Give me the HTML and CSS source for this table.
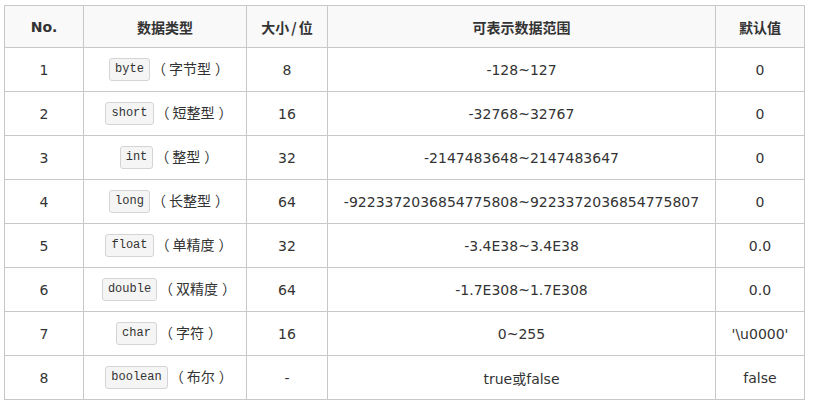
FILE: index.html
```html
<!DOCTYPE html>
<html lang="zh">
<head>
<meta charset="utf-8">
<title>Java 基本数据类型</title>
<link rel="stylesheet" href="styles.css">
</head>
<body>
<table class="types">
  <colgroup>
    <col class="c-no">
    <col class="c-type">
    <col class="c-size">
    <col class="c-range">
    <col class="c-default">
  </colgroup>
  <thead>
    <tr><th>No.</th><th>数据类型</th><th>大小<span class="slash">/</span>位</th><th>可表示数据范围</th><th>默认值</th></tr>
  </thead>
  <tbody>
    <tr><td>1</td><td class="type"><code>byte</code><span class="cn"><span class="po">（</span>字节型<span class="pc">）</span></span></td><td>8</td><td>-128~127</td><td>0</td></tr>
    <tr><td>2</td><td class="type"><code>short</code><span class="cn"><span class="po">（</span>短整型<span class="pc">）</span></span></td><td>16</td><td>-32768~32767</td><td>0</td></tr>
    <tr><td>3</td><td class="type"><code>int</code><span class="cn"><span class="po">（</span>整型<span class="pc">）</span></span></td><td>32</td><td>-2147483648~2147483647</td><td>0</td></tr>
    <tr><td>4</td><td class="type"><code>long</code><span class="cn"><span class="po">（</span>长整型<span class="pc">）</span></span></td><td>64</td><td>-9223372036854775808~9223372036854775807</td><td>0</td></tr>
    <tr><td>5</td><td class="type"><code>float</code><span class="cn"><span class="po">（</span>单精度<span class="pc">）</span></span></td><td>32</td><td>-3.4E38~3.4E38</td><td>0.0</td></tr>
    <tr><td>6</td><td class="type"><code>double</code><span class="cn"><span class="po">（</span>双精度<span class="pc">）</span></span></td><td>64</td><td>-1.7E308~1.7E308</td><td>0.0</td></tr>
    <tr><td>7</td><td class="type"><code>char</code><span class="cn"><span class="po">（</span>字符<span class="pc">）</span></span></td><td>16</td><td>0~255</td><td>'\u0000'</td></tr>
    <tr><td>8</td><td class="type"><code>boolean</code><span class="cn"><span class="po">（</span>布尔<span class="pc">）</span></span></td><td>-</td><td>true或false</td><td>false</td></tr>
  </tbody>
</table>
</body>
</html>
```

FILE: styles.css
```css
html, body {
  margin: 0;
  padding: 0;
  background: #ffffff;
}

body {
  padding: 5px 0 0 4px;
  font-family: "DejaVu Sans", "Noto Sans CJK SC", sans-serif;
  font-size: 14px;
  color: #333333;
}

.types {
  border-collapse: collapse;
  table-layout: fixed;
  width: 800px;
  border: 1px solid #c8c8c8;
}

.c-no { width: 79px; }
.c-type { width: 163px; }
.c-size { width: 81px; }
.c-range { width: 388px; }
.c-default { width: 89px; }

.types th,
.types td {
  border: 1px solid #c8c8c8;
  text-align: center;
  vertical-align: middle;
  padding: 0;
  white-space: nowrap;
}

.types th {
  height: 41px;
  background: #f9f9f9;
  font-weight: bold;
}

.types td {
  height: 43px;
}

.types td.type {
  padding-left: 4px;
}

.slash {
  font-family: "Noto Sans CJK SC", sans-serif;
  margin: 0 2px;
}

.cn {
  font-family: "Noto Sans CJK SC", sans-serif;
  text-spacing-trim: space-all;
}

.cn .po {
  display: inline-block;
  margin-left: -3px;
  margin-right: 3px;
}

.cn .pc {
  display: inline-block;
  margin-left: 4px;
  margin-right: -4px;
}

.types code {
  display: inline-block;
  font-family: "Liberation Mono", monospace;
  font-size: 12px;
  line-height: 17px;
  padding: 2px 5px;
  margin-right: 5px;
  border: 1px solid #d4d4d4;
  border-radius: 3px;
  background: #f5f5f5;
  color: #333333;
  vertical-align: middle;
}
```
